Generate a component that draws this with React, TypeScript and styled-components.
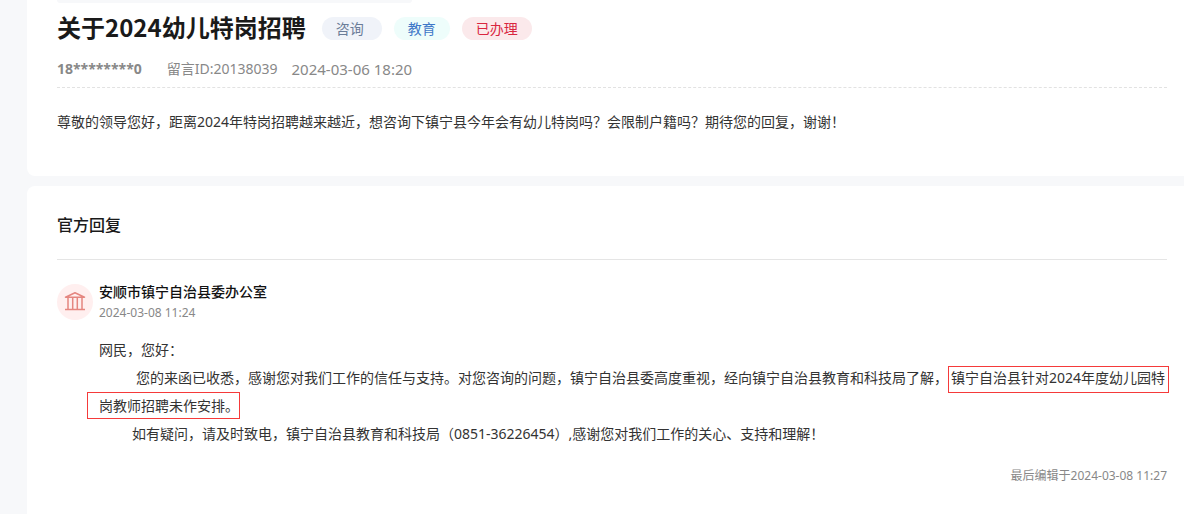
import React from 'react';
import styled, { createGlobalStyle } from 'styled-components';

const GlobalStyle = createGlobalStyle`
  * { box-sizing: border-box; }
  body {
    margin: 0;
    background: #f7f8fa;
    color: #333;
    font: 14px/28px "Noto Sans", "Noto Sans CJK SC", sans-serif;
  }
  h1, h2, h3, p { margin: 0; }
`;

const Page = styled.main`
  display: flex;
  flex-direction: column;
  gap: 10px;
  min-height: 100vh;
  padding-left: 27px;
`;

const Card = styled.section<{ $position: 'first' | 'last' }>`
  padding: ${p => (p.$position === 'first' ? '0 17px 40px 30px' : '20px 17px 24px 30px')};
  background: #fff;
  border-radius: ${p => (p.$position === 'first' ? '0 0 0 8px' : '8px 0 0 0')};
  flex-grow: ${p => (p.$position === 'last' ? 1 : 0)};
`;

const Strip = styled.div`
  width: 32%;
  height: 3px;
  background: #f7f8fa;
  border-radius: 0 0 4px 4px;
`;

const TitleRow = styled.header`
  display: flex;
  align-items: center;
  gap: 12px;
  height: 50px;
`;

const Title = styled.h1`
  margin-right: 4px;
  padding-bottom: 2px;
  color: #1a1a1a;
  font: bold 24px/32px "Noto Sans CJK SC", sans-serif;
`;

const tones = {
  grey: ['#f0f3f9', '#6b7c98'],
  blue: ['#eefdfb', '#3f78c8'],
  red: ['#fbe9eb', '#d9263f'],
};

const Tag = styled.span<{ $tone: keyof typeof tones }>`
  min-width: ${p => (p.$tone === 'grey' ? 60 : 56)}px;
  padding: 0 14px;
  border-radius: 12px;
  line-height: 23px;
  background: ${p => tones[p.$tone][0]};
  color: ${p => tones[p.$tone][1]};
`;

const Meta = styled.div`
  display: flex;
  gap: 14px;
  height: 35px;
  line-height: 32px;
  color: #888;
  border-bottom: 1px dashed #e2e2e2;
`;

const Author = styled.strong`
  margin-right: 11px;
`;

const Posted = styled.time`
  font-size: 15px;
`;

const Question = styled.p`
  padding-top: 20px;
`;

const SectionTitle = styled.h2`
  height: 54px;
  color: #1a1a1a;
  font-size: 16px;
  font-weight: 500;
  line-height: 38px;
  border-bottom: 1px solid #e5e5e5;
`;

const Responder = styled.div`
  display: flex;
  gap: 6px;
  padding-top: 22px;
`;

const Avatar = styled.span`
  display: flex;
  align-items: center;
  justify-content: center;
  width: 36px;
  height: 36px;
  margin-top: 2px;
  border-radius: 50%;
  background: #ffefef;
`;

const Office = styled.h3`
  color: #111;
  font-size: 14px;
  font-weight: 500;
  line-height: 20px;
`;

const Time = styled.time`
  display: block;
  color: #888;
  font-size: 12px;
  line-height: 22px;
`;

const Reply = styled.div`
  padding: 12px 0 0 42px;
`;

const Line = styled.p<{ $indent?: number }>`
  text-indent: ${p => p.$indent ?? 0}px;
`;

const Marked = styled.span<{ $lead?: boolean }>`
  padding: ${p => (p.$lead ? '1px 3px 5px 2px' : '3px 0 3px 11px')};
  margin: ${p => (p.$lead ? '0 -6px 0 0' : '0 0 0 -12px')};
  border: 1px solid #f53a3a;
`;

const Edited = styled.footer`
  margin-top: 18px;
  color: #888;
  font-size: 12px;
  line-height: 20px;
  text-align: right;
`;

const HallIcon = () => (
  <svg width="22" height="20" viewBox="0 0 22 20" fill="none" stroke="#e58680" strokeWidth="1.5" strokeLinejoin="round" aria-hidden="true">
    <path d="M1.5 5.2 11 .8 20.5 5.2Z M4 5.5V17.5 M8.7 5.5V17.5 M13.3 5.5V17.5 M18 5.5V17.5 M1 17.5H21" />
  </svg>
);

export default function App() {
  return (
    <>
      <GlobalStyle />
      <Page>
        <Card $position="first">
          <Strip />
          <TitleRow>
            <Title>关于2024幼儿特岗招聘</Title>
            <Tag $tone="grey">咨询</Tag>
            <Tag $tone="blue">教育</Tag>
            <Tag $tone="red">已办理</Tag>
          </TitleRow>
          <Meta>
            <Author>18********0</Author>
            <span>留言ID:20138039</span>
            <Posted>2024-03-06 18:20</Posted>
          </Meta>
          <Question>
            尊敬的领导您好，距离2024年特岗招聘越来越近，想咨询下镇宁县今年会有幼儿特岗吗？会限制户籍吗？期待您的回复，谢谢！
          </Question>
        </Card>
        <Card $position="last">
          <SectionTitle>官方回复</SectionTitle>
          <Responder>
            <Avatar><HallIcon /></Avatar>
            <div>
              <Office>安顺市镇宁自治县委办公室</Office>
              <Time>2024-03-08 11:24</Time>
            </div>
          </Responder>
          <Reply>
            <Line>网民，您好：</Line>
            <Line $indent={37}>
              您的来函已收悉，感谢您对我们工作的信任与支持。对您咨询的问题，镇宁自治县委高度重视，经向镇宁自治县教育和科技局了解，<Marked $lead>镇宁自治县针对2024年度幼儿园特</Marked><Marked>岗教师招聘未作安排。</Marked>
            </Line>
            <Line $indent={33}>
              如有疑问，请及时致电，镇宁自治县教育和科技局（0851-36226454）,感谢您对我们工作的关心、支持和理解！
            </Line>
          </Reply>
          <Edited>最后编辑于2024-03-08 11:27</Edited>
        </Card>
      </Page>
    </>
  );
}
